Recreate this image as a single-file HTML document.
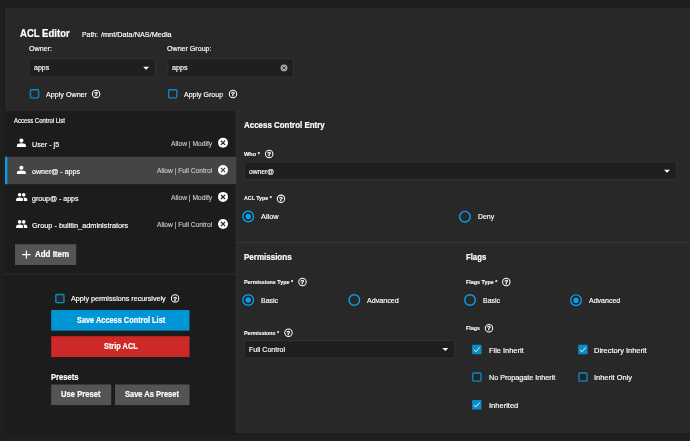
<!DOCTYPE html>
<html><head><meta charset="utf-8"><title>ACL Editor</title>
<style>
html,body{margin:0;padding:0;background:#1f1f1f;}
body{width:690px;height:441px;position:relative;overflow:hidden;font-family:"Liberation Sans",sans-serif;}
.t{position:absolute;white-space:pre;line-height:1;transform-origin:0 50%;}
</style></head><body>
<svg width="690" height="441" viewBox="0 0 690 441" style="position:absolute;left:0;top:0;will-change:transform">
<rect x="0" y="0" width="690" height="441" fill="#1f1f1f"/>
<rect x="4" y="6.4" width="687" height="428.2" fill="#1b1b1b"/>
<rect x="5" y="7.5" width="685" height="425.8" fill="#282828"/>
<rect x="5" y="109.9" width="685" height="0.9" fill="#303030"/>
<rect x="236" y="110.8" width="0.9" height="322.2" fill="#2f2f2f"/>
<rect x="5" y="110.8" width="230.6" height="322.5" fill="#1c1c1c"/>
<rect x="5" y="156.8" width="231" height="27.4" fill="#454545"/>
<rect x="5" y="156.8" width="2.3" height="27.4" fill="#00a0ea"/>
<rect x="5" y="273.6" width="230.6" height="1" fill="#303030"/>
<rect x="235.6" y="242" width="454.4" height="1" fill="#353535"/>
<rect x="28.95" y="58.75" width="126.50" height="18.40" rx="1" fill="#1f1f1f" stroke="#353535" stroke-width="0.9"/>
<rect x="167.85" y="58.75" width="125.50" height="18.40" rx="1" fill="#1f1f1f" stroke="#353535" stroke-width="0.9"/>
<rect x="244.05" y="162.05" width="432.40" height="17.65" rx="1" fill="#1f1f1f" stroke="#353535" stroke-width="0.9"/>
<rect x="244.05" y="340.65" width="210.80" height="17.40" rx="1" fill="#1f1f1f" stroke="#353535" stroke-width="0.9"/>
<path d="M143.1 66.8 L149.1 66.8 L146.1 69.8 Z" fill="#fff"/>
<path d="M664 169.7 L670 169.7 L667 172.7 Z" fill="#fff"/>
<path d="M442.3 348.1 L448.3 348.1 L445.3 351.1 Z" fill="#fff"/>
<circle cx="284.0" cy="67.9" r="3.45" fill="#a9a9a9"/>
<path d="M282.4475 66.34750000000001 L285.5525 69.4525 M285.5525 66.34750000000001 L282.4475 69.4525" stroke="#1f1f1f" stroke-width="0.9" fill="none"/>
<rect x="30.43" y="89.72" width="8.15" height="8.15" rx="1" fill="#262626" stroke="#0b8ac6" stroke-width="1.35"/>
<rect x="168.62" y="89.72" width="8.15" height="8.15" rx="1" fill="#262626" stroke="#0b8ac6" stroke-width="1.35"/>
<rect x="55.82" y="294.53" width="8.15" height="8.15" rx="1" fill="#262626" stroke="#0b8ac6" stroke-width="1.35"/>
<rect x="472.10" y="344.80" width="9.4" height="9.4" rx="0.9" fill="#0c8dca"/>
<path d="M474.00 350.00 L475.90 351.70 L479.70 347.30" stroke="#f0f8fc" stroke-width="0.95" fill="none"/>
<rect x="578.20" y="344.80" width="9.4" height="9.4" rx="0.9" fill="#0c8dca"/>
<path d="M580.10 350.00 L582.00 351.70 L585.80 347.30" stroke="#f0f8fc" stroke-width="0.95" fill="none"/>
<rect x="472.82" y="372.98" width="8.15" height="8.15" rx="1" fill="#262626" stroke="#0b8ac6" stroke-width="1.35"/>
<rect x="578.92" y="372.98" width="8.15" height="8.15" rx="1" fill="#262626" stroke="#0b8ac6" stroke-width="1.35"/>
<rect x="472.10" y="400.00" width="9.4" height="9.4" rx="0.9" fill="#0c8dca"/>
<path d="M474.00 405.20 L475.90 406.90 L479.70 402.50" stroke="#f0f8fc" stroke-width="0.95" fill="none"/>
<circle cx="248.2" cy="216.6" r="5.3" fill="#231c1b" stroke="#05a2ee" stroke-width="1.4"/>
<circle cx="248.2" cy="216.6" r="2.8" fill="#04a0ec"/>
<circle cx="464.9" cy="216.65" r="5.3" fill="none" stroke="#05a2ee" stroke-width="1.4"/>
<circle cx="248.2" cy="300" r="5.3" fill="#231c1b" stroke="#05a2ee" stroke-width="1.4"/>
<circle cx="248.2" cy="300" r="2.8" fill="#04a0ec"/>
<circle cx="354.3" cy="300" r="5.3" fill="none" stroke="#05a2ee" stroke-width="1.4"/>
<circle cx="470" cy="300" r="5.3" fill="none" stroke="#05a2ee" stroke-width="1.4"/>
<circle cx="576" cy="300.2" r="5.3" fill="#231c1b" stroke="#05a2ee" stroke-width="1.4"/>
<circle cx="576" cy="300.2" r="2.8" fill="#04a0ec"/>
<circle cx="96.1" cy="94" r="3.7" fill="none" stroke="#fff" stroke-width="1.05"/>
<text x="96.1" y="96.20" font-size="6.2" font-weight="700" text-anchor="middle" fill="#fff" stroke="#fff" stroke-width="0.28" font-family="Liberation Sans, sans-serif">?</text>
<circle cx="233" cy="94" r="3.7" fill="none" stroke="#fff" stroke-width="1.05"/>
<text x="233" y="96.20" font-size="6.2" font-weight="700" text-anchor="middle" fill="#fff" stroke="#fff" stroke-width="0.28" font-family="Liberation Sans, sans-serif">?</text>
<circle cx="269.2" cy="154" r="3.7" fill="none" stroke="#fff" stroke-width="1.05"/>
<text x="269.2" y="156.20" font-size="6.2" font-weight="700" text-anchor="middle" fill="#fff" stroke="#fff" stroke-width="0.28" font-family="Liberation Sans, sans-serif">?</text>
<circle cx="281" cy="198.8" r="3.7" fill="none" stroke="#fff" stroke-width="1.05"/>
<text x="281" y="201.00" font-size="6.2" font-weight="700" text-anchor="middle" fill="#fff" stroke="#fff" stroke-width="0.28" font-family="Liberation Sans, sans-serif">?</text>
<circle cx="302.5" cy="282" r="3.7" fill="none" stroke="#fff" stroke-width="1.05"/>
<text x="302.5" y="284.20" font-size="6.2" font-weight="700" text-anchor="middle" fill="#fff" stroke="#fff" stroke-width="0.28" font-family="Liberation Sans, sans-serif">?</text>
<circle cx="506.3" cy="282" r="3.7" fill="none" stroke="#fff" stroke-width="1.05"/>
<text x="506.3" y="284.20" font-size="6.2" font-weight="700" text-anchor="middle" fill="#fff" stroke="#fff" stroke-width="0.28" font-family="Liberation Sans, sans-serif">?</text>
<circle cx="288.5" cy="332.8" r="3.7" fill="none" stroke="#fff" stroke-width="1.05"/>
<text x="288.5" y="335.00" font-size="6.2" font-weight="700" text-anchor="middle" fill="#fff" stroke="#fff" stroke-width="0.28" font-family="Liberation Sans, sans-serif">?</text>
<circle cx="489" cy="328.2" r="3.7" fill="none" stroke="#fff" stroke-width="1.05"/>
<text x="489" y="330.40" font-size="6.2" font-weight="700" text-anchor="middle" fill="#fff" stroke="#fff" stroke-width="0.28" font-family="Liberation Sans, sans-serif">?</text>
<circle cx="175.1" cy="298.4" r="3.7" fill="none" stroke="#fff" stroke-width="1.05"/>
<text x="175.1" y="300.60" font-size="6.2" font-weight="700" text-anchor="middle" fill="#fff" stroke="#fff" stroke-width="0.28" font-family="Liberation Sans, sans-serif">?</text>
<circle cx="21.4" cy="140.60000000000002" r="2.05" fill="#fff"/>
<path d="M16.9 146.9 L16.9 145.70000000000002 Q16.9 143.3 21.4 143.3 Q25.9 143.3 25.9 145.70000000000002 L25.9 146.9 Z" fill="#fff"/>
<circle cx="21.4" cy="167.8" r="2.05" fill="#fff"/>
<path d="M16.9 174.1 L16.9 172.9 Q16.9 170.5 21.4 170.5 Q25.9 170.5 25.9 172.9 L25.9 174.1 Z" fill="#fff"/>
<circle cx="19.60" cy="194.80" r="1.8" fill="#fff"/>
<circle cx="23.70" cy="194.80" r="1.8" fill="#fff"/>
<path d="M16.10 200.90 L16.10 199.60 Q16.10 197.50 19.60 197.50 Q23.10 197.50 23.10 199.60 L23.10 200.90 Z" fill="#fff"/>
<path d="M24.00 200.90 L24.00 199.60 Q24.00 198.30 23.00 197.60 Q23.50 197.50 24.10 197.50 Q27.30 197.50 27.30 199.60 L27.30 200.90 Z" fill="#fff"/>
<circle cx="19.60" cy="221.90" r="1.8" fill="#fff"/>
<circle cx="23.70" cy="221.90" r="1.8" fill="#fff"/>
<path d="M16.10 228.00 L16.10 226.70 Q16.10 224.60 19.60 224.60 Q23.10 224.60 23.10 226.70 L23.10 228.00 Z" fill="#fff"/>
<path d="M24.00 228.00 L24.00 226.70 Q24.00 225.40 23.00 224.70 Q23.50 224.60 24.10 224.60 Q27.30 224.60 27.30 226.70 L27.30 228.00 Z" fill="#fff"/>
<circle cx="223" cy="142.8" r="5" fill="#fff"/>
<path d="M220.9 140.70000000000002 L225.1 144.9 M225.1 140.70000000000002 L220.9 144.9" stroke="#1c1c1c" stroke-width="1.2" fill="none"/>
<circle cx="223" cy="170" r="5" fill="#fff"/>
<path d="M220.9 167.9 L225.1 172.1 M225.1 167.9 L220.9 172.1" stroke="#454545" stroke-width="1.2" fill="none"/>
<circle cx="223" cy="196.9" r="5" fill="#fff"/>
<path d="M220.9 194.8 L225.1 199.0 M225.1 194.8 L220.9 199.0" stroke="#1c1c1c" stroke-width="1.2" fill="none"/>
<circle cx="223" cy="224.0" r="5" fill="#fff"/>
<path d="M220.9 221.9 L225.1 226.1 M225.1 221.9 L220.9 226.1" stroke="#1c1c1c" stroke-width="1.2" fill="none"/>
<rect x="15" y="244.2" width="61.2" height="20.8" fill="#545454"/>
<path d="M22.2 254.6 L30.6 254.6 M26.4 250.4 L26.4 258.8" stroke="#fff" stroke-width="1.15" fill="none"/>
<rect x="51.2" y="310" width="138.3" height="20.6" fill="#0095d5"/>
<rect x="51.2" y="336.2" width="138.3" height="20.8" fill="#ce2929"/>
<rect x="51.2" y="384.5" width="60" height="20.6" fill="#545454"/>
<rect x="115" y="384.5" width="74.5" height="20.6" fill="#545454"/>
</svg>
<div style="position:absolute;left:0;top:0;width:690px;height:441px;will-change:transform">
<span class="t" style="left:20.30px;top:29px;font-size:10.3px;font-weight:700;color:#ffffff;-webkit-text-stroke:0.22px #ffffff;transform:scaleX(0.9273)">ACL Editor</span>
<span class="t" style="left:82.00px;top:31px;font-size:8.1px;font-weight:400;color:#ffffff;-webkit-text-stroke:0.18px #ffffff;transform:scaleX(0.8463)">Path:</span>
<span class="t" style="left:101.40px;top:31px;font-size:8.1px;font-weight:400;color:#ffffff;-webkit-text-stroke:0.18px #ffffff;transform:scaleX(0.9019)">/mnt/Data/NAS/Media</span>
<span class="t" style="left:29.00px;top:45px;font-size:8.1px;font-weight:400;color:#ffffff;-webkit-text-stroke:0.18px #ffffff;transform:scaleX(0.8814)">Owner:</span>
<span class="t" style="left:167.00px;top:45px;font-size:8.1px;font-weight:400;color:#ffffff;-webkit-text-stroke:0.18px #ffffff;transform:scaleX(0.8752)">Owner Group:</span>
<span class="t" style="left:34.00px;top:64px;font-size:8.1px;font-weight:400;color:#ffffff;-webkit-text-stroke:0.18px #ffffff;transform:scaleX(0.8655)">apps</span>
<span class="t" style="left:172.00px;top:64px;font-size:8.1px;font-weight:400;color:#ffffff;-webkit-text-stroke:0.18px #ffffff;transform:scaleX(0.8826)">apps</span>
<span class="t" style="left:46.00px;top:91px;font-size:8.1px;font-weight:400;color:#ffffff;-webkit-text-stroke:0.18px #ffffff;transform:scaleX(0.8847)">Apply Owner</span>
<span class="t" style="left:183.90px;top:91px;font-size:8.1px;font-weight:400;color:#ffffff;-webkit-text-stroke:0.18px #ffffff;transform:scaleX(0.8689)">Apply Group</span>
<span class="t" style="left:14.00px;top:117px;font-size:7.2px;font-weight:400;color:#ffffff;-webkit-text-stroke:0.18px #ffffff;transform:scaleX(0.8291)">Access Control List</span>
<span class="t" style="left:32.20px;top:141px;font-size:8.0px;font-weight:400;color:#ffffff;-webkit-text-stroke:0.18px #ffffff;transform:scaleX(0.8996)">User - j5</span>
<span class="t" style="left:32.00px;top:168px;font-size:8.0px;font-weight:400;color:#ffffff;-webkit-text-stroke:0.18px #ffffff;transform:scaleX(0.8828)">owner@ - apps</span>
<span class="t" style="left:32.00px;top:195px;font-size:8.0px;font-weight:400;color:#ffffff;-webkit-text-stroke:0.18px #ffffff;transform:scaleX(0.8766)">group@ - apps</span>
<span class="t" style="left:32.00px;top:222px;font-size:8.0px;font-weight:400;color:#ffffff;-webkit-text-stroke:0.18px #ffffff;transform:scaleX(0.9167)">Group - builtin_administrators</span>
<span class="t" style="left:171.00px;top:140px;font-size:8.0px;font-weight:400;color:#c4c4c4;-webkit-text-stroke:0.18px #c4c4c4;transform:scaleX(0.8373)">Allow | Modify</span>
<span class="t" style="left:156.80px;top:167px;font-size:8.0px;font-weight:400;color:#c4c4c4;-webkit-text-stroke:0.18px #c4c4c4;transform:scaleX(0.8280)">Allow | Full Control</span>
<span class="t" style="left:171.00px;top:194px;font-size:8.0px;font-weight:400;color:#c4c4c4;-webkit-text-stroke:0.18px #c4c4c4;transform:scaleX(0.8373)">Allow | Modify</span>
<span class="t" style="left:156.80px;top:221px;font-size:8.0px;font-weight:400;color:#c4c4c4;-webkit-text-stroke:0.18px #c4c4c4;transform:scaleX(0.8280)">Allow | Full Control</span>
<span class="t" style="left:243.60px;top:120px;font-size:9.4px;font-weight:700;color:#ffffff;-webkit-text-stroke:0.22px #ffffff;transform:scaleX(0.8464)">Access Control Entry</span>
<span class="t" style="left:244.00px;top:151px;font-size:6px;font-weight:700;color:#ffffff;-webkit-text-stroke:0.12px #ffffff;transform:scaleX(0.9412)">Who *</span>
<span class="t" style="left:249.20px;top:168px;font-size:8.0px;font-weight:400;color:#ffffff;-webkit-text-stroke:0.18px #ffffff;transform:scaleX(0.8355)">owner@</span>
<span class="t" style="left:244.00px;top:195px;font-size:6px;font-weight:700;color:#ffffff;-webkit-text-stroke:0.12px #ffffff;transform:scaleX(0.8807)">ACL Type *</span>
<span class="t" style="left:261.00px;top:213px;font-size:8.0px;font-weight:400;color:#ffffff;-webkit-text-stroke:0.18px #ffffff;transform:scaleX(0.9150)">Allow</span>
<span class="t" style="left:477.60px;top:213px;font-size:8.0px;font-weight:400;color:#ffffff;-webkit-text-stroke:0.18px #ffffff;transform:scaleX(0.8669)">Deny</span>
<span class="t" style="left:243.60px;top:252px;font-size:9.5px;font-weight:700;color:#ffffff;-webkit-text-stroke:0.22px #ffffff;transform:scaleX(0.8425)">Permissions</span>
<span class="t" style="left:465.60px;top:252px;font-size:9.5px;font-weight:700;color:#ffffff;-webkit-text-stroke:0.22px #ffffff;transform:scaleX(0.8141)">Flags</span>
<span class="t" style="left:244.00px;top:279px;font-size:6px;font-weight:700;color:#ffffff;-webkit-text-stroke:0.12px #ffffff;transform:scaleX(0.8922)">Permissions Type *</span>
<span class="t" style="left:261.00px;top:297px;font-size:8.0px;font-weight:400;color:#ffffff;-webkit-text-stroke:0.18px #ffffff;transform:scaleX(0.8690)">Basic</span>
<span class="t" style="left:366.70px;top:297px;font-size:8.0px;font-weight:400;color:#ffffff;-webkit-text-stroke:0.18px #ffffff;transform:scaleX(0.8934)">Advanced</span>
<span class="t" style="left:466.00px;top:279px;font-size:6px;font-weight:700;color:#ffffff;-webkit-text-stroke:0.12px #ffffff;transform:scaleX(0.8996)">Flags Type *</span>
<span class="t" style="left:483.00px;top:297px;font-size:8.0px;font-weight:400;color:#ffffff;-webkit-text-stroke:0.18px #ffffff;transform:scaleX(0.8690)">Basic</span>
<span class="t" style="left:588.50px;top:297px;font-size:8.0px;font-weight:400;color:#ffffff;-webkit-text-stroke:0.18px #ffffff;transform:scaleX(0.8766)">Advanced</span>
<span class="t" style="left:244.00px;top:330px;font-size:6px;font-weight:700;color:#ffffff;-webkit-text-stroke:0.12px #ffffff;transform:scaleX(0.8819)">Permissions *</span>
<span class="t" style="left:249.00px;top:346px;font-size:8.0px;font-weight:400;color:#ffffff;-webkit-text-stroke:0.18px #ffffff;transform:scaleX(0.8801)">Full Control</span>
<span class="t" style="left:466.00px;top:325px;font-size:6px;font-weight:700;color:#ffffff;-webkit-text-stroke:0.12px #ffffff;transform:scaleX(0.8933)">Flags</span>
<span class="t" style="left:489.00px;top:347px;font-size:8.0px;font-weight:400;color:#ffffff;-webkit-text-stroke:0.18px #ffffff;transform:scaleX(0.9288)">File Inherit</span>
<span class="t" style="left:594.00px;top:347px;font-size:8.0px;font-weight:400;color:#ffffff;-webkit-text-stroke:0.18px #ffffff;transform:scaleX(0.9333)">Directory Inherit</span>
<span class="t" style="left:488.70px;top:374px;font-size:8.0px;font-weight:400;color:#ffffff;-webkit-text-stroke:0.18px #ffffff;transform:scaleX(0.8980)">No Propagate Inherit</span>
<span class="t" style="left:594.00px;top:374px;font-size:8.0px;font-weight:400;color:#ffffff;-webkit-text-stroke:0.18px #ffffff;transform:scaleX(0.9290)">Inherit Only</span>
<span class="t" style="left:488.70px;top:402px;font-size:8.0px;font-weight:400;color:#ffffff;-webkit-text-stroke:0.18px #ffffff;transform:scaleX(0.9409)">Inherited</span>
<span class="t" style="left:35.00px;top:249px;font-size:9.5px;font-weight:700;color:#ffffff;-webkit-text-stroke:0.22px #ffffff;transform:scaleX(0.8366)">Add Item</span>
<span class="t" style="left:71.10px;top:295px;font-size:8.0px;font-weight:400;color:#ffffff;-webkit-text-stroke:0.18px #ffffff;transform:scaleX(0.8987)">Apply permissions recursively</span>
<span class="t" style="left:76.80px;top:315px;font-size:9.5px;font-weight:700;color:#ffffff;-webkit-text-stroke:0.22px #ffffff;transform:scaleX(0.7757)">Save Access Control List</span>
<span class="t" style="left:103.70px;top:341px;font-size:9.5px;font-weight:700;color:#ffffff;-webkit-text-stroke:0.22px #ffffff;transform:scaleX(0.7755)">Strip ACL</span>
<span class="t" style="left:51.00px;top:372px;font-size:9.8px;font-weight:700;color:#ffffff;-webkit-text-stroke:0.22px #ffffff;transform:scaleX(0.7767)">Presets</span>
<span class="t" style="left:61.10px;top:389px;font-size:9.5px;font-weight:700;color:#ffffff;-webkit-text-stroke:0.22px #ffffff;transform:scaleX(0.8041)">Use Preset</span>
<span class="t" style="left:124.80px;top:389px;font-size:9.5px;font-weight:700;color:#ffffff;-webkit-text-stroke:0.22px #ffffff;transform:scaleX(0.7890)">Save As Preset</span>
</div>
</body></html>
